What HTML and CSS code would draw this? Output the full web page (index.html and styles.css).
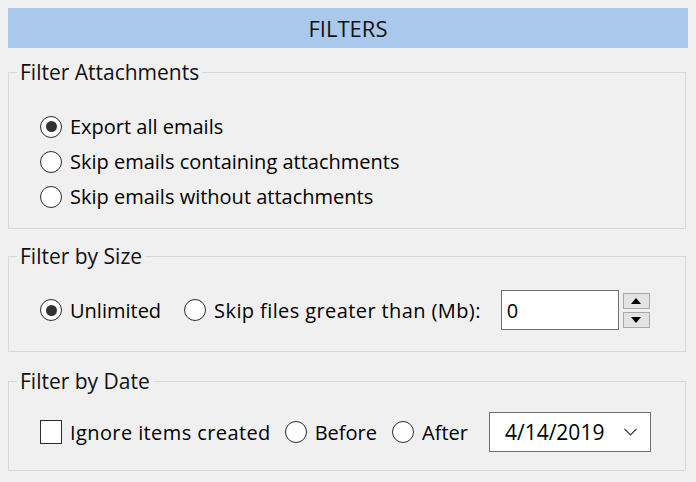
FILE: index.html
```html
<!DOCTYPE html>
<html>
<head>
<meta charset="utf-8">
<link rel="stylesheet" href="styles.css">
</head>
<body>
<div class="panel">
  <div class="header">FILTERS</div>

  <fieldset class="group g1">
    <legend>Filter Attachments</legend>
    <div class="rows">
      <div class="opt"><span class="radio checked"></span><span class="lbl">Export all emails</span></div>
      <div class="opt"><span class="radio"></span><span class="lbl">Skip emails containing attachments</span></div>
      <div class="opt"><span class="radio"></span><span class="lbl">Skip emails without attachments</span></div>
    </div>
  </fieldset>

  <fieldset class="group g2">
    <legend>Filter by Size</legend>
    <div class="line">
      <div class="opt"><span class="radio checked"></span><span class="lbl">Unlimited</span></div>
      <div class="opt o2"><span class="radio"></span><span class="lbl">Skip files greater than (Mb):</span></div>
      <div class="num">0</div>
      <div class="spin">
        <div class="sbtn"><svg width="10" height="6" viewBox="0 0 10 6"><polygon points="0,6 10,6 5,0" fill="#000"/></svg></div>
        <div class="sbtn"><svg width="10" height="6" viewBox="0 0 10 6"><polygon points="0,0 10,0 5,6" fill="#000"/></svg></div>
      </div>
    </div>
  </fieldset>

  <fieldset class="group g3">
    <legend>Filter by Date</legend>
    <div class="line">
      <div class="opt o1"><span class="check"></span><span class="lbl">Ignore items created</span></div>
      <div class="opt o3"><span class="radio"></span><span class="lbl">Before</span></div>
      <div class="opt o4"><span class="radio"></span><span class="lbl">After</span></div>
      <div class="date"><span>4/14/2019</span>
        <svg class="chev" width="13" height="8" viewBox="0 0 13 8"><polyline points="0.5,0.8 6.5,6.8 12.5,0.8" fill="none" stroke="#333" stroke-width="1.2"/></svg>
      </div>
    </div>
  </fieldset>
</div>
</body>
</html>
```
FILE: styles.css
```css
html, body {
  margin: 0;
  padding: 0;
  background: #f0f0f0;
}
body {
  width: 696px;
  height: 482px;
  overflow: hidden;
  font-family: "Open Sans", "Liberation Sans", sans-serif;
  color: #000;
}
.panel {
  padding: 8px 8px 0 8px;
}
.header {
  height: 40px;
  width: 680px;
  background: #a9c8ec;
  display: flex;
  align-items: center;
  justify-content: center;
  font-size: 22px;
  color: #111;
}
.group {
  margin: 12px 2px 0 0;
  padding: 0;
  border: 1px solid #d8d8d8;
  min-width: 0;
}
.group legend {
  margin-left: 8px;
  padding: 0 3px;
  font-size: 21px;
  line-height: 24px;
  height: 24px;
  color: #111;
}
.rows, .line {
  padding-left: 31px;
}
.g1 .rows { padding-top: 25px; padding-bottom: 14px; }
.g2 { margin-top: 15px; }
.g2 .line { margin-top: 22px; margin-bottom: 21px; }
.g3 { margin-top: 17px; }
.g3 .line { margin-top: 19px; margin-bottom: 18px; }

.rows {
  display: flex;
  flex-direction: column;
}
.rows .opt {
  height: 35px;
}
.opt {
  display: flex;
  align-items: center;
  font-size: 20px;
}
.radio {
  box-sizing: border-box;
  width: 22px;
  height: 22px;
  border: 1.5px solid #2b2b2b;
  border-radius: 50%;
  background: #fff;
  display: flex;
  align-items: center;
  justify-content: center;
  flex: none;
}
.radio.checked::after {
  content: "";
  width: 11px;
  height: 11px;
  border-radius: 50%;
  background: #333;
}
.check {
  box-sizing: border-box;
  width: 22px;
  height: 24px;
  border: 1.5px solid #2b2b2b;
  background: #fff;
  flex: none;
}
.lbl {
  margin-left: 8px;
  white-space: nowrap;
}
.line {
  display: flex;
  align-items: center;
  height: 40px;
}
.o2 { margin-left: 23px; }
.o2 .lbl, .o1 .lbl { letter-spacing: 0.4px; }
.o3 { margin-left: 14px; }
.o4 { margin-left: 15px; }
.num {
  box-sizing: border-box;
  margin-left: 20px;
  width: 118px;
  height: 40px;
  background: #fff;
  border: 1px solid #6e6e6e;
  font-size: 20px;
  display: flex;
  align-items: center;
  padding-left: 5px;
}
.spin {
  margin-left: 4px;
  display: flex;
  flex-direction: column;
  gap: 3px;
}
.sbtn {
  box-sizing: border-box;
  width: 27px;
  height: 16px;
  border: 1px solid #a8a8a8;
  background: #e3e3e3;
  display: flex;
  align-items: center;
  justify-content: center;
}
.date {
  box-sizing: border-box;
  margin-left: 21px;
  width: 162px;
  height: 40px;
  background: #fff;
  border: 1px solid #6e6e6e;
  display: flex;
  align-items: center;
  padding-left: 15px;
  font-size: 21px;
}
.date .chev {
  margin-left: auto;
  margin-right: 13px;
}
```
